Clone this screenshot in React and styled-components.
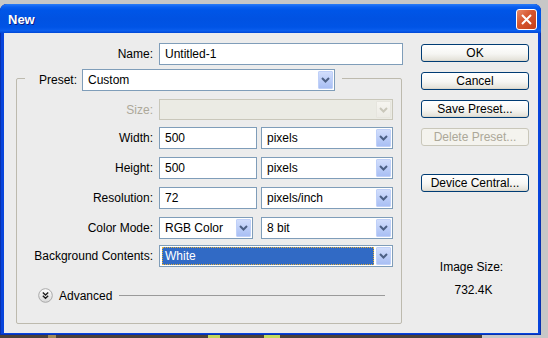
import React from "react";
import styled, { createGlobalStyle } from "styled-components";

const Global = createGlobalStyle`
  html, body {
    margin: 0;
    padding: 0;
    background: #c7c7c7;
  }
  * {
    box-sizing: border-box;
  }
`;

const Chevron = ({ color = "#4d6185" }) => (
  <svg width="9" height="6" viewBox="0 0 9 6">
    <path d="M1 1 L4.5 4.5 L8 1" fill="none" stroke={color} strokeWidth="2" />
  </svg>
);

const Select = ({ value, width, disabled, focused, height = 22 }) => (
  <SelectBox $width={width} $height={height} $disabled={disabled}>
    <SelectValue $focused={focused}>{value}</SelectValue>
    <ArrowBtn $disabled={disabled}>
      <Chevron color={disabled ? "#c9c7ba" : "#4d6185"} />
    </ArrowBtn>
  </SelectBox>
);

const App = () => {
  return (
    <Page>
      <Global />
      <Window>
        <TitleBar>
          <Title>New</Title>
          <CloseBtn>
            <svg width="11" height="11" viewBox="0 0 11 11">
              <path d="M1 1 L10 10 M10 1 L1 10" stroke="#fff" strokeWidth="2" />
            </svg>
          </CloseBtn>
        </TitleBar>
        <Body>
          <LeftCol>
            <NameRow>
              <Label $width={149}>Name:</Label>
              <TextInput $width={244} value="Untitled-1" readOnly />
            </NameRow>
            <Group>
              <GroupHead>
                <Label $width={52}>Preset:</Label>
                <Select value="Custom" width={253} />
              </GroupHead>
              <Rows>
                <Row $mt={8}>
                  <Label $width={136} $disabled>Size:</Label>
                  <Select value="" width={234} height={21} disabled />
                </Row>
                <Row $mt={7}>
                  <Label $width={136}>Width:</Label>
                  <Fields>
                    <TextInput $width={98} value="500" readOnly />
                    <Select value="pixels" width={132} />
                  </Fields>
                </Row>
                <Row $mt={8}>
                  <Label $width={136}>Height:</Label>
                  <Fields>
                    <TextInput $width={98} value="500" readOnly />
                    <Select value="pixels" width={132} />
                  </Fields>
                </Row>
                <Row $mt={8}>
                  <Label $width={136}>Resolution:</Label>
                  <Fields>
                    <TextInput $width={98} value="72" readOnly />
                    <Select value="pixels/inch" width={132} />
                  </Fields>
                </Row>
                <Row $mt={8}>
                  <Label $width={136}>Color Mode:</Label>
                  <Fields $gap={8}>
                    <Select value="RGB Color" width={94} />
                    <Select value="8 bit" width={132} />
                  </Fields>
                </Row>
                <Row $mt={6}>
                  <Label $width={136}>Background Contents:</Label>
                  <Select value="White" width={234} focused />
                </Row>
              </Rows>
              <AdvancedRow>
                <svg width="15" height="15" viewBox="0 0 15 15">
                  <defs>
                    <linearGradient id="adv" x1="0" y1="0" x2="0" y2="1">
                      <stop offset="0" stopColor="#ffffff" />
                      <stop offset="1" stopColor="#d8d8d8" />
                    </linearGradient>
                  </defs>
                  <circle cx="7.5" cy="7.5" r="6.8" fill="url(#adv)" stroke="#a9a9a9" />
                  <path d="M4.8 4.6 L7.5 7 L10.2 4.6 M4.8 7.8 L7.5 10.2 L10.2 7.8" fill="none" stroke="#1e1e1e" strokeWidth="1.4" />
                </svg>
                <AdvText>Advanced</AdvText>
                <Rule />
              </AdvancedRow>
            </Group>
          </LeftCol>
          <RightCol>
            <Button>OK</Button>
            <Button>Cancel</Button>
            <Button>Save Preset...</Button>
            <Button disabled>Delete Preset...</Button>
            <Button $mt={28}>Device Central...</Button>
            <SizeInfo>
              <span>Image Size:</span>
              <SizeValue>732.4K</SizeValue>
            </SizeInfo>
          </RightCol>
        </Body>
      </Window>
      <Desktop />
    </Page>
  );
};

const Page = styled("div")`
  width: 548px;
  height: 338px;
  padding-top: 4px;
  display: flex;
  flex-direction: column;
  overflow: hidden;
  font-family: "Liberation Sans", Arial, sans-serif;
  font-size: 12px;
  color: #000;
`;
const Window = styled("div")`
  width: 541px;
  height: 331px;
  flex-shrink: 0;
  display: flex;
  flex-direction: column;
  background: #0744dc;
  border-radius: 7px 7px 0 0;
  box-shadow: inset 1px 0 0 #0831b0, inset -1px 0 0 #0831b0, inset 0 -1px 0 #0831b0;
`;
const TitleBar = styled("div")`
  height: 29px;
  flex-shrink: 0;
  display: flex;
  align-items: center;
  justify-content: space-between;
  padding: 1px 4px 0 8px;
  border-radius: 7px 7px 0 0;
  background: linear-gradient(
    #2b7cf6 0,
    #0a5ff0 3px,
    #0056e8 6px,
    #0152e2 50%,
    #0054e6 80%,
    #0b5eee 92%,
    #0047d6 100%
  );
`;
const Title = styled("span")`
  font-weight: bold;
  font-size: 13px;
  color: #fff;
  text-shadow: 1px 1px 0 #0a1c86;
`;
const CloseBtn = styled("div")`
  width: 21px;
  height: 21px;
  display: flex;
  align-items: center;
  justify-content: center;
  border: 1px solid #fff;
  border-radius: 3px;
  background: linear-gradient(135deg, #e98a68 0%, #d6552e 45%, #c3401b 100%);
`;
const Body = styled("div")`
  flex: 1;
  margin: 0 3px 2px 4px;
  padding-top: 10px;
  display: flex;
  background: #ececec;
`;
const LeftCol = styled("div")`
  width: 417px;
  display: flex;
  flex-direction: column;
`;
const NameRow = styled("div")`
  display: flex;
  align-items: center;
  height: 22px;
`;
const Label = styled("span")`
  width: ${(p) => p.$width}px;
  flex-shrink: 0;
  text-align: right;
  margin-right: ${(p) => (p.$width === 52 ? 5 : 6)}px;
  white-space: nowrap;
  color: ${(p) => (p.$disabled ? "#aca899" : "#000")};
`;
const TextInput = styled("input")`
  width: ${(p) => p.$width}px;
  height: 22px;
  border: 1px solid #7f9db9;
  background: #fff;
  padding: 0 5px;
  font-family: "Liberation Sans", Arial, sans-serif;
  font-size: 12px;
  color: #000;
  outline: none;
`;
const Group = styled("div")`
  margin: 13px 0 0 12px;
  width: 386px;
  height: 246px;
  border: 1px solid #bdbaae;
  border-radius: 2px;
  display: flex;
  flex-direction: column;
`;
const GroupHead = styled("div")`
  margin: -10px 0 0 8px;
  width: fit-content;
  padding-right: 7px;
  display: flex;
  align-items: center;
  background: #ececec;
`;
const Rows = styled("div")`
  display: flex;
  flex-direction: column;
`;
const Row = styled("div")`
  margin-top: ${(p) => p.$mt}px;
  display: flex;
  align-items: center;
`;
const Fields = styled("div")`
  display: flex;
  gap: ${(p) => p.$gap || 4}px;
`;
const SelectBox = styled("div")`
  width: ${(p) => p.$width}px;
  height: ${(p) => p.$height}px;
  display: flex;
  align-items: stretch;
  border: 1px solid ${(p) => (p.$disabled ? "#c9c7ba" : "#7f9db9")};
  background: ${(p) => (p.$disabled ? "#ebebe4" : "#fff")};
  padding: 1px;
`;
const SelectValue = styled("div")`
  flex: 1;
  display: flex;
  align-items: center;
  padding-left: 4px;
  white-space: nowrap;
  ${(p) =>
    p.$focused
      ? `
    margin: 0 2px 0 1px;
    padding-left: 3px;
    background: #316ac5;
    color: #fff;
    outline: 1px dotted #e0b040;
    outline-offset: -1px;
  `
      : ""}
`;
const ArrowBtn = styled("div")`
  width: 15px;
  display: flex;
  align-items: center;
  justify-content: center;
  border: 1px solid ${(p) => (p.$disabled ? "#e6e5de" : "#bfd0f8")};
  border-radius: 1px;
  background: ${(p) =>
    p.$disabled
      ? "linear-gradient(#f6f5f0, #ecebe5)"
      : "linear-gradient(#d2defc, #b9cbf7 60%, #a9bff4)"};
`;
const AdvancedRow = styled("div")`
  margin-top: 21px;
  height: 15px;
  display: flex;
  align-items: center;
  padding: 0 16px 0 21px;
`;
const AdvText = styled("span")`
  margin-left: 6px;
`;
const Rule = styled("div")`
  flex: 1;
  height: 1px;
  margin-left: 7px;
  background: #9a9a9a;
`;
const RightCol = styled("div")`
  width: 108px;
  padding-top: 1px;
  display: flex;
  flex-direction: column;
  gap: 10px;
`;
const Button = styled("button")`
  width: 108px;
  height: 18px;
  margin-top: ${(p) => (p.$mt ? p.$mt - 10 : 0)}px;
  padding: 0;
  border: 1px solid ${(p) => (p.disabled ? "#c9c7ba" : "#003c74")};
  border-radius: 3px;
  background: ${(p) =>
    p.disabled
      ? "#f4f3ee"
      : "linear-gradient(#ffffff, #f6f6f3 55%, #e6e4dc 90%, #d6d2c6)"};
  font-family: "Liberation Sans", Arial, sans-serif;
  font-size: 12px;
  color: ${(p) => (p.disabled ? "#aca899" : "#000")};
`;
const SizeInfo = styled("div")`
  margin-top: 58px;
  padding-right: 7px;
  display: flex;
  flex-direction: column;
  align-items: center;
  gap: 9px;
  line-height: 14px;
`;
const SizeValue = styled("span")`
  margin-left: 4px;
`;
const Desktop = styled("div")`
  height: 3px;
  width: 482px;
  background: linear-gradient(
    90deg,
    #4b4139 0 48px,
    #a08a5a 48px 56px,
    #4b4139 56px 208px,
    #c3d65c 208px 220px,
    #4b4139 220px 264px,
    #c4db5e 264px 280px,
    #4b4139 280px
  );
`;

export default App;
